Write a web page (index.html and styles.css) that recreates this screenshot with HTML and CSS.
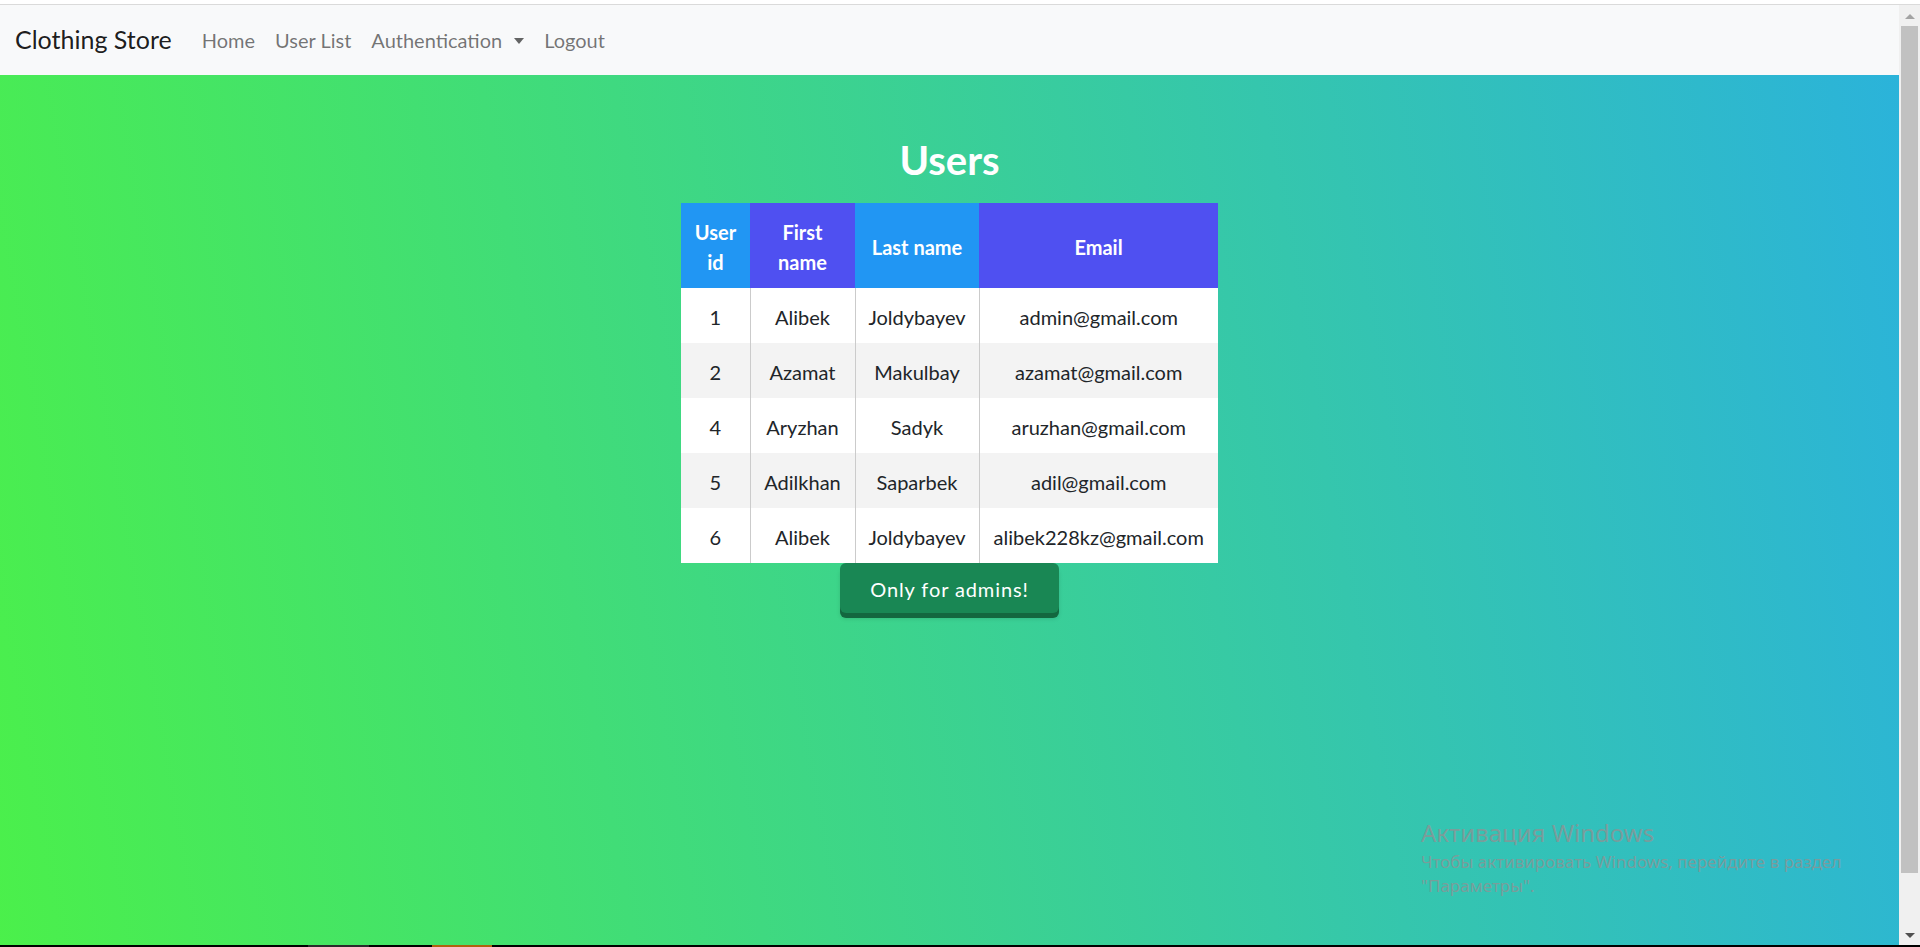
FILE: index.html
```html
<!DOCTYPE html>
<html lang="en">
<head>
<meta charset="utf-8">
<title>Clothing Store - Users</title>
<link rel="stylesheet" href="styles.css">
</head>
<body>
  <div class="frame-top"></div>
  <div class="viewport">
    <div class="app">
      <nav class="navbar">
        <a class="brand" href="#">Clothing Store</a>
        <ul class="nav">
          <li><a class="nav-link" href="#">Home</a></li>
          <li><a class="nav-link" href="#">User List</a></li>
          <li><a class="nav-link dropdown-toggle" href="#">Authentication</a></li>
          <li><a class="nav-link" href="#">Logout</a></li>
        </ul>
      </nav>
      <main class="page">
        <h2 class="title">Users</h2>
        <table class="users">
          <colgroup>
            <col class="c-id">
            <col class="c-first">
            <col class="c-last">
            <col class="c-email">
          </colgroup>
          <thead>
            <tr>
              <th class="h-blue">User id</th>
              <th class="h-purple">First name</th>
              <th class="h-blue">Last name</th>
              <th class="h-purple">Email</th>
            </tr>
          </thead>
          <tbody>
            <tr><td>1</td><td>Alibek</td><td>Joldybayev</td><td>admin@gmail.com</td></tr>
            <tr><td>2</td><td>Azamat</td><td>Makulbay</td><td>azamat@gmail.com</td></tr>
            <tr><td>4</td><td>Aryzhan</td><td>Sadyk</td><td>aruzhan@gmail.com</td></tr>
            <tr><td>5</td><td>Adilkhan</td><td>Saparbek</td><td>adil@gmail.com</td></tr>
            <tr><td>6</td><td>Alibek</td><td>Joldybayev</td><td>alibek228kz@gmail.com</td></tr>
          </tbody>
        </table>
        <button class="admin-btn" type="button">Only for admins!</button>
      </main>
    </div>
    <div class="scrollbar">
      <div class="sb-btn"><span class="arrow-up"></span></div>
      <div class="sb-thumb"></div>
      <div class="sb-space"></div>
      <div class="sb-btn"><span class="arrow-down"></span></div>
    </div>
  </div>
  <div class="taskbar"><span class="tb-gray"></span><span class="tb-orange"></span></div>
  <div class="watermark">
    <div class="wm-title">Активация Windows</div>
    <div class="wm-text">Чтобы активировать Windows, перейдите в раздел<br>"Параметры".</div>
  </div>
</body>
</html>
```
FILE: styles.css
```css
html, body {
  margin: 0;
  padding: 0;
}

body {
  position: relative;
  height: 947px;
  display: flex;
  flex-direction: column;
  overflow: hidden;
  font-family: Lato, "Noto Sans", sans-serif;
  color: #212529;
  background: #fff;
}

.frame-top {
  height: 4px;
  background: #ffffff;
  border-bottom: 1px solid #dadada;
  flex: none;
}

.viewport {
  flex: 1;
  min-height: 0;
  display: flex;
}

.app {
  flex: 1;
  min-width: 0;
  overflow: hidden;
}

/* scrollbar */
.scrollbar {
  width: 21px;
  flex: none;
  display: flex;
  flex-direction: column;
  background: #f0f0f0;
}

.sb-btn {
  height: 21px;
  flex: none;
  display: flex;
  align-items: center;
  justify-content: center;
}

.arrow-up {
  width: 0;
  height: 0;
  margin-top: 2px;
  border-bottom: 5px solid #a3a3a3;
  border-left: 5px solid transparent;
  border-right: 5px solid transparent;
}

.arrow-down {
  width: 0;
  height: 0;
  margin-top: 2px;
  border-top: 5px solid #505050;
  border-left: 5px solid transparent;
  border-right: 5px solid transparent;
}

.sb-thumb {
  height: 847px;
  flex: none;
  margin: 0 2px;
  background: #c1c1c1;
}

.sb-space {
  flex: 1;
}

/* navbar */
.navbar {
  height: 70px;
  box-sizing: border-box;
  padding: 10px 15px;
  display: flex;
  align-items: center;
  background: #f8f9fa;
}

.brand {
  font-size: 25px;
  line-height: 37.5px;
  padding: 6.25px 0;
  margin-right: 20px;
  color: rgba(0, 0, 0, 0.9);
  text-decoration: none;
}

.nav {
  display: flex;
  list-style: none;
  margin: 0;
  padding: 0;
}

.nav-link {
  display: block;
  padding: 10px;
  font-size: 20px;
  line-height: 30px;
  color: rgba(0, 0, 0, 0.55);
  text-decoration: none;
}

.dropdown-toggle::after {
  content: "";
  display: inline-block;
  margin-left: 12px;
  vertical-align: 4px;
  border-top: 6px solid rgba(0, 0, 0, 0.6);
  border-left: 5.5px solid transparent;
  border-right: 5.5px solid transparent;
}

/* page */
.page {
  min-height: 930px;
  box-sizing: border-box;
  padding-top: 60.5px;
  display: flex;
  flex-direction: column;
  align-items: center;
  background: linear-gradient(80deg, #4bf04a 0%, #2bb3da 100%);
}

.title {
  margin: 0 0 19.5px;
  font-size: 40px;
  line-height: 48px;
  font-weight: 700;
  color: #ffffff;
}

.users {
  width: 537px;
  table-layout: fixed;
  border-collapse: collapse;
  background: #ffffff;
  font-size: 20px;
  line-height: 30px;
  text-align: center;
}

.c-id { width: 69px; }
.c-first { width: 105px; }
.c-last { width: 124px; }
.c-email { width: 239px; }

.users th {
  padding: 13.5px 8px 11.5px;
  font-weight: 700;
  color: #ffffff;
  line-height: 30px;
}

.h-blue { background: #2196f3; }
.h-purple { background: #4f50f1; }

.users td {
  padding: 13.5px 4px 11.5px;
  color: #212529;
  white-space: nowrap;
}

.users td + td {
  border-left: 1px solid #cbcbcb;
}

.users tbody tr:nth-child(even) {
  background: #f3f3f3;
}

.admin-btn {
  width: 219px;
  height: 50px;
  padding: 11px 0 9px;
  border: 0;
  border-radius: 6px;
  background: #198754;
  color: #ffffff;
  font-family: Lato, "Noto Sans", sans-serif;
  font-size: 20px;
  line-height: 30px;
  letter-spacing: 0.9px;
  box-shadow: 0 5px 0 #13673f, 0 6px 4px rgba(0, 0, 0, 0.12);
  cursor: pointer;
}

/* taskbar edge */
.taskbar {
  height: 2px;
  flex: none;
  background: #000000;
  display: flex;
}

.tb-gray {
  width: 61px;
  margin-left: 308px;
  background: #2b2b2b;
}

.tb-orange {
  width: 60px;
  margin-left: 63px;
  background: #b0620f;
}

/* windows activation watermark overlay */
.watermark {
  position: absolute;
  left: 1421px;
  top: 818px;
  font-family: "Noto Sans", "Open Sans", sans-serif;
  color: rgba(135, 150, 150, 0.85);
  pointer-events: none;
}

.wm-title {
  font-size: 24px;
  line-height: 30px;
}

.wm-text {
  margin-top: 2.4px;
  font-size: 17px;
  line-height: 24px;
}
```
